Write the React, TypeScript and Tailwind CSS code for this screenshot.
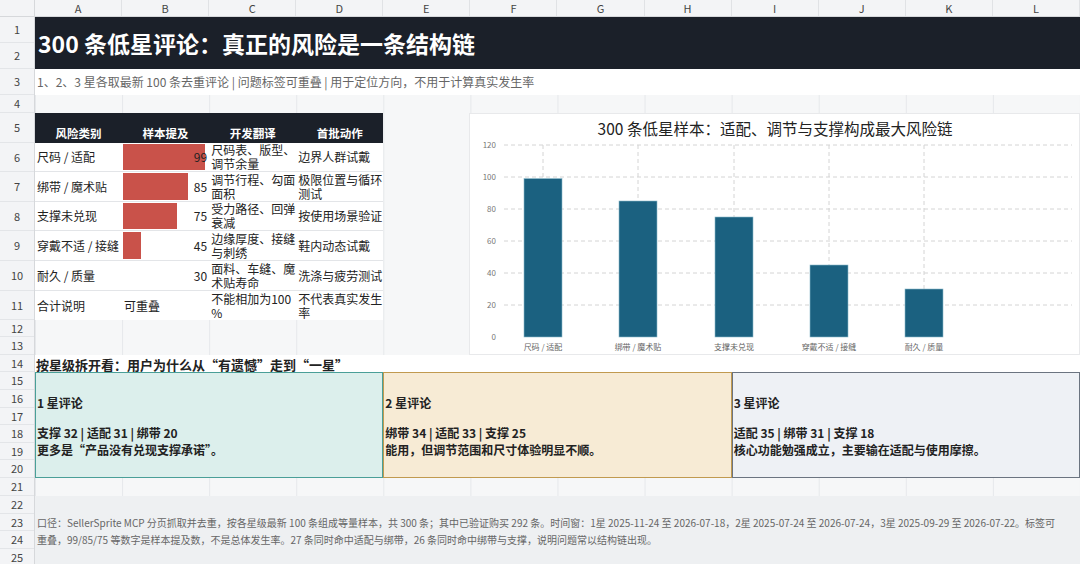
import React from "react";

const rowH = [26,26,26,18,30,29,30,29,30,30,29,17,18,17,18,18,17,18,17,18,18,18,17,18,17];
const cols = ["A","B","C","D","E","F","G","H","I","J","K","L"];
const font = { fontFamily: '"Noto Sans CJK SC", "Noto Sans", sans-serif' };

const rows = [
  ["尺码 / 适配", 99, "尺码表、版型、调节余量", "边界人群试戴"],
  ["绑带 / 魔术贴", 85, "调节行程、勾面面积", "极限位置与循环测试"],
  ["支撑未兑现", 75, "受力路径、回弹衰减", "按使用场景验证"],
  ["穿戴不适 / 接缝", 45, "边缘厚度、接缝与刺绣", "鞋内动态试戴"],
  ["耐久 / 质量", 30, "面料、车缝、魔术贴寿命", "洗涤与疲劳测试"],
] as const;

function Chart() {
  const data = [["尺码 / 适配",99],["绑带 / 魔术贴",85],["支撑未兑现",75],["穿戴不适 / 接缝",45],["耐久 / 质量",30]] as const;
  const y = (v: number) => 223 - v * 1.6;
  const cx = [73, 168, 264, 359, 454];
  return (
    <svg width="610" height="243" className="block">
      <text x="305" y="21" textAnchor="middle" fontSize="15.5" fill="#222" style={font}>300 条低星样本：适配、调节与支撑构成最大风险链</text>
      {[0,20,40,60,80,100,120].map(v => (
        <g key={v}>
          {v > 0 && <line x1="34" x2="602" y1={y(v)} y2={y(v)} stroke="#d4d4d4" strokeDasharray="4 3" />}
          <text x="26" y={y(v) + 3} textAnchor="end" fontSize="8" fill="#777" style={font}>{v}</text>
        </g>
      ))}
      {cx.map(x => <line key={x} x1={x} x2={x} y1={31} y2={223} stroke="#d4d4d4" strokeDasharray="4 3" />)}
      {data.map(([l, v], i) => (
        <g key={l}>
          <rect x={cx[i] - 19} y={y(v)} width="38" height={223 - y(v)} fill="#1b6180" stroke="#8ab8c9" strokeWidth="0.6" />
          <text x={cx[i]} y="236" textAnchor="middle" fontSize="8" fill="#666" style={font}>{l}</text>
        </g>
      ))}
    </svg>
  );
}

export default function App() {
  const gridRows = rowH.map(h => `${h}px`).join(" ");
  return (
    <div className="w-[1080px] h-[564px] overflow-hidden bg-[#f6f7f8] text-[#222]" style={font}>
      <div className="flex h-[17px] bg-[#f3f4f6] border-b border-[#d6d8db]">
        <div className="w-[35px] border-r border-[#d6d8db]" />
        {cols.map(c => (
          <div key={c} className="w-[87.08px] text-center text-[11px] leading-[17px] text-[#444] border-r border-[#e0e2e5]">{c}</div>
        ))}
      </div>
      <div className="flex">
        <div className="w-[35px] flex flex-col bg-[#f3f4f6] border-r border-[#d6d8db]">
          {rowH.map((h, i) => (
            <div key={i} style={{ height: h }} className="flex items-center justify-center text-[11px] text-[#444] border-b border-[#e3e5e8]">{i + 1}</div>
          ))}
        </div>
        <div
          className="relative grid w-[1045px] bg-[linear-gradient(to_right,#e6e8eb_1px,transparent_1px)] bg-[length:87.08px_100%]"
          style={{ gridTemplateColumns: "repeat(12, 1fr)", gridTemplateRows: gridRows }}
        >
          <div className="col-[1/13] row-[1/3] bg-[#1b2029] text-white font-bold text-[23px] flex items-center pl-[3px]">300 条低星评论：真正的风险是一条结构链</div>
          <div className="col-[1/13] row-[3] bg-white text-[12px] text-[#666] flex items-center pl-[2px]">1、2、3 星各取最新 100 条去重评论 | 问题标签可重叠 | 用于定位方向，不用于计算真实发生率</div>
          {["风险类别","样本提及","开发翻译","首批动作"].map((h, i) => (
            <div key={h} className="row-[5] bg-[#1b2029] text-white font-bold text-[11.5px] flex items-end justify-center pb-[1px]" style={{ gridColumn: i + 1 }}>{h}</div>
          ))}
          {rows.map(([a, v, c, d], i) => (
            <React.Fragment key={a}>
              <div className="bg-white border-b border-[#e3e5e8] text-[12px] flex items-center pl-[2px]" style={{ gridColumn: 1, gridRow: 6 + i }}>{a}</div>
              <div className="bg-white border-b border-[#e3e5e8] relative flex items-center justify-end pr-[2px] text-[12px]" style={{ gridColumn: 2, gridRow: 6 + i }}>
                <div className="absolute left-[1px] top-[1px] bottom-[1px] bg-[#c9524a]" style={{ width: `${((v - 30) / 69) * 82}px` }} />
                <span className="relative">{v}</span>
              </div>
              <div className="bg-white border-b border-[#e3e5e8] text-[12px] leading-[14px] flex items-center pl-[2px]" style={{ gridColumn: 3, gridRow: 6 + i }}>{c}</div>
              <div className="bg-white border-b border-[#e3e5e8] text-[12px] leading-[14px] flex items-center pl-[2px]" style={{ gridColumn: 4, gridRow: 6 + i }}>{d}</div>
            </React.Fragment>
          ))}
          <div className="col-[1] row-[11] bg-white text-[12px] flex items-center pl-[2px]">合计说明</div>
          <div className="col-[2] row-[11] bg-white text-[12px] flex items-center pl-[2px]">可重叠</div>
          <div className="col-[3] row-[11] bg-white text-[12px] leading-[14px] flex items-center pl-[2px]">不能相加为100<br />%</div>
          <div className="col-[4] row-[11] bg-white text-[12px] leading-[14px] flex items-center pl-[2px]">不代表真实发生率</div>
          <div className="col-[6/13] row-[5/14] bg-white border border-[#e8e9eb] ml-[-1px]">
            <Chart />
          </div>
          <div className="col-[1/13] row-[14] bg-white font-bold text-[13px] flex items-end pl-[1px] leading-none pb-[1px]">按星级拆开看：用户为什么从“有遗憾”走到“一星”</div>
          {[
            ["1 星评论", "支撑 32 | 适配 31 | 绑带 20", "更多是“产品没有兑现支撑承诺”。", "bg-[#dcefec] border-[#4a9f98]", "col-[1/5]"],
            ["2 星评论", "绑带 34 | 适配 33 | 支撑 25", "能用，但调节范围和尺寸体验明显不顺。", "bg-[#f7ebd5] border-[#c19a4f]", "col-[5/9]"],
            ["3 星评论", "适配 35 | 绑带 31 | 支撑 18", "核心功能勉强成立，主要输在适配与使用摩擦。", "bg-[#eef1f5] border-[#6b7480]", "col-[9/13]"],
          ].map(([t, s, d, cls, col]) => (
            <div key={t} className={`${col} row-[15/21] border-[1.5px] ${cls} flex flex-col pl-[1px] text-[12px] font-bold leading-[17px]`}>
              <div className="mt-[21px]">{t}</div>
              <div className="mt-[13px]">{s}</div>
              <div>{d}</div>
            </div>
          ))}
          <div className="col-[1/13] row-[22/26] bg-[#eef0f2] text-[10px] text-[#666] leading-[17px] flex items-center pl-[2px] pr-[20px]">
            口径：SellerSprite MCP 分页抓取并去重，按各星级最新 100 条组成等量样本，共 300 条；其中已验证购买 292 条。时间窗：1星 2025-11-24 至 2026-07-18，2星 2025-07-24 至 2026-07-24，3星 2025-09-29 至 2026-07-22。标签可重叠，99/85/75 等数字是样本提及数，不是总体发生率。27 条同时命中适配与绑带，26 条同时命中绑带与支撑，说明问题常以结构链出现。
          </div>
        </div>
      </div>
    </div>
  );
}
